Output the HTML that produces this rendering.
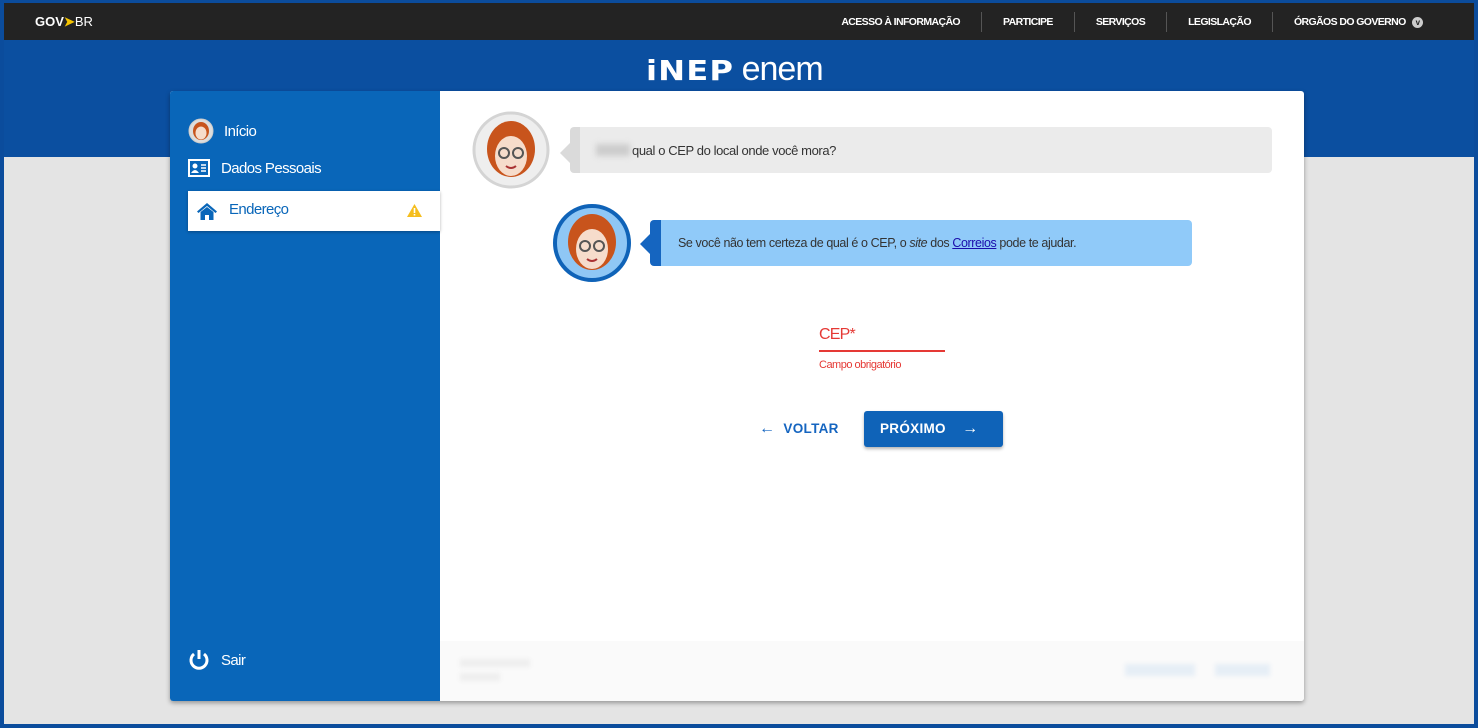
<!DOCTYPE html>
<html><head><meta charset="utf-8"><style>
*{margin:0;padding:0;box-sizing:border-box}
body{width:1478px;height:728px;overflow:hidden;background:#0b4c9c;font-family:"Liberation Sans",sans-serif;position:relative}
.frame{position:absolute;left:4px;top:3px;width:1470px;height:721px;background:#e4e4e4;overflow:hidden}
.top{position:absolute;left:0;top:0;width:100%;height:37px;background:#232323;color:#fff}
.hdr{position:absolute;left:0;top:37px;width:100%;height:117px;background:#0b4fa0}
.gov{position:absolute;left:31px;top:11px;font-size:13px;font-weight:bold;letter-spacing:0}
.nav{position:absolute;top:0;right:30px;height:37px;display:flex;align-items:center;font-size:10.5px;font-weight:bold;letter-spacing:-0.6px}
.nav span{padding:0 21px;border-left:1px solid #555;line-height:20px}
.nav span:first-child{border:none}
.logo{position:absolute;left:642px;top:46px;color:#fff;font-size:34px;line-height:40px}
.card{position:absolute;left:166px;top:88px;width:1134px;height:610px;background:#fff;border-radius:3px;box-shadow:0 2px 5px rgba(0,0,0,.35);overflow:hidden}
.side{position:absolute;left:0;top:0;width:270px;height:610px;background:#0966b9;color:#fff;font-size:15px;letter-spacing:-0.6px}
.it{position:absolute;left:18px;display:flex;align-items:center}
.act{position:absolute;left:18px;top:100px;width:252px;height:40px;background:#fff;color:#0966b9;box-shadow:0 1px 3px rgba(0,0,0,.3)}
.bub{position:absolute;border-radius:4px;font-size:13px;letter-spacing:-0.4px;display:flex;align-items:center}
.foot{position:absolute;left:270px;top:550px;width:864px;height:60px;background:#fafafa}
</style></head><body>
<div class="frame">
<div class="top">
<div class="gov">GOV<span style="color:#f5c400">&#10148;</span><span style="font-weight:normal">BR</span></div>
<div class="nav"><span>ACESSO À INFORMAÇÃO</span><span>PARTICIPE</span><span>SERVIÇOS</span><span>LEGISLAÇÃO</span><span>ÓRGÃOS DO GOVERNO <b style="display:inline-block;width:11px;height:11px;border-radius:50%;background:#ccc;color:#222;font-size:8px;text-align:center;line-height:11px;margin-left:4px">v</b></span></div>
</div>
<div class="hdr"></div>
<div class="logo"><b style="font-family:'DejaVu Sans';font-weight:900;letter-spacing:1px;font-size:28px;display:inline-block;transform:scaleX(1.15);transform-origin:left">iNEP</b>&nbsp;&nbsp;<span style="letter-spacing:-1px">enem</span></div>
<div class="card">
<div class="side">
<div class="it" style="top:27px"><svg width="26" height="26" viewBox="0 0 26 26"><circle cx="13" cy="13" r="12" fill="#ddd" stroke="#ccc"/><ellipse cx="13" cy="13" rx="8" ry="9" fill="#c8541c"/><ellipse cx="13" cy="15" rx="5.5" ry="6.5" fill="#f6dccb"/></svg><span style="margin-left:10px">Início</span></div>
<div class="it" style="top:68px"><svg width="22" height="18" viewBox="0 0 22 18"><rect x="1" y="1" width="20" height="16" fill="none" stroke="#fff" stroke-width="2"/><circle cx="7" cy="7" r="2.5" fill="#fff"/><path d="M3 14q4-6 8 0z" fill="#fff"/><path d="M13 6h5M13 9h5M13 12h5" stroke="#fff" stroke-width="1.5"/></svg><span style="margin-left:11px">Dados Pessoais</span></div>
<div class="act"><svg style="position:absolute;left:9px;top:11px" width="20" height="18" viewBox="0 0 20 18"><path d="M10 1L0 9.5l1.5 1.5L10 4l8.5 7 1.5-1.5z" fill="#0966b9"/><path d="M3.5 10L10 5l6.5 5v8h-4.5v-5h-4v5H3.5z" fill="#0966b9"/></svg><span style="position:absolute;left:41px;top:10px">Endereço</span><svg style="position:absolute;left:219px;top:13px" width="15" height="13" viewBox="0 0 15 13"><path d="M7.5 0L15 13H0z" fill="#f5be1e"/><path d="M7.5 4v5M7.5 10v1.5" stroke="#fff" stroke-width="1.6"/></svg></div>
<div class="it" style="top:558px"><svg width="22" height="22" viewBox="0 0 22 22"><path d="M6 5a8 8 0 1 0 10 0" fill="none" stroke="#fff" stroke-width="3"/><path d="M11 1v9" stroke="#fff" stroke-width="3"/></svg><span style="margin-left:11px">Sair</span></div>
</div>
<svg style="position:absolute;left:302px;top:20px" width="78" height="78" viewBox="0 0 78 78"><circle cx="39" cy="39" r="37" fill="#eee" stroke="#d4d4d4" stroke-width="3"/><ellipse cx="39" cy="38" rx="24" ry="28" fill="#c8541c"/><ellipse cx="39" cy="45" rx="16" ry="20" fill="#f6dccb"/><circle cx="32" cy="42" r="5" fill="none" stroke="#555" stroke-width="2"/><circle cx="46" cy="42" r="5" fill="none" stroke="#555" stroke-width="2"/><path d="M34 55q5 4 10 0" stroke="#a33" stroke-width="2" fill="none"/></svg>
<div class="bub" style="left:400px;top:36px;width:702px;height:46px;background:#ebebeb;border-left:10px solid #dadada;padding-left:16px;color:#333"><span style="display:inline-block;width:34px;height:12px;background:#ccc;filter:blur(3px);margin-right:2px"></span>qual o CEP do local onde você mora?</div>
<div style="position:absolute;left:390px;top:52px;width:0;height:0;border:10px solid transparent;border-right-color:#dadada;border-left:0"></div>
<svg style="position:absolute;left:382px;top:112px" width="80" height="80" viewBox="0 0 80 80"><circle cx="40" cy="40" r="37" fill="#8fc7f5" stroke="#0f63b8" stroke-width="4"/><ellipse cx="40" cy="39" rx="24" ry="28" fill="#c8541c"/><ellipse cx="40" cy="46" rx="16" ry="20" fill="#f6dccb"/><circle cx="33" cy="43" r="5" fill="none" stroke="#555" stroke-width="2"/><circle cx="47" cy="43" r="5" fill="none" stroke="#555" stroke-width="2"/><path d="M35 56q5 4 10 0" stroke="#a33" stroke-width="2" fill="none"/></svg>
<div class="bub" style="left:480px;top:129px;width:542px;height:46px;background:#90caf9;border-left:11px solid #1565c0;padding-left:17px;color:#333;font-size:12.5px">Se você não tem certeza de qual é o CEP, o&nbsp;<i>site</i>&nbsp;dos&nbsp;<u style="color:#1a0dab">Correios</u>&nbsp;pode te ajudar.</div>
<div style="position:absolute;left:470px;top:143px;width:0;height:0;border:10px solid transparent;border-right-color:#1565c0;border-left:0"></div>
<div style="position:absolute;left:649px;top:235px;color:#e53935;font-size:16px;letter-spacing:-0.8px">CEP*</div>
<div style="position:absolute;left:649px;top:259px;width:126px;height:2px;background:#e53935"></div>
<div style="position:absolute;left:649px;top:268px;color:#e53935;font-size:11px;letter-spacing:-0.5px">Campo obrigatório</div>
<div style="position:absolute;left:589px;top:329px;color:#1565c0;font-size:13.5px;font-weight:bold;letter-spacing:.3px"><span style="font-size:16px">&larr;</span>&nbsp;&nbsp;VOLTAR</div>
<div style="position:absolute;left:694px;top:320px;width:139px;height:36px;background:#0f63b8;border-radius:3px;box-shadow:0 2px 3px rgba(0,0,0,.3);color:#fff;font-size:13.5px;font-weight:bold;line-height:36px;padding-left:16px;letter-spacing:.3px">PRÓXIMO&nbsp;&nbsp;&nbsp;&nbsp;<span style="font-size:16px">&rarr;</span></div>
<div class="foot"><div style="position:absolute;left:20px;top:18px;width:70px;height:8px;background:#eee;filter:blur(2px)"></div><div style="position:absolute;left:20px;top:32px;width:40px;height:8px;background:#eee;filter:blur(2px)"></div><div style="position:absolute;left:685px;top:23px;width:70px;height:12px;background:#e6eef6;filter:blur(2px)"></div><div style="position:absolute;left:775px;top:23px;width:55px;height:12px;background:#e6eef6;filter:blur(2px)"></div></div>
</div>
</div>
</body></html>
